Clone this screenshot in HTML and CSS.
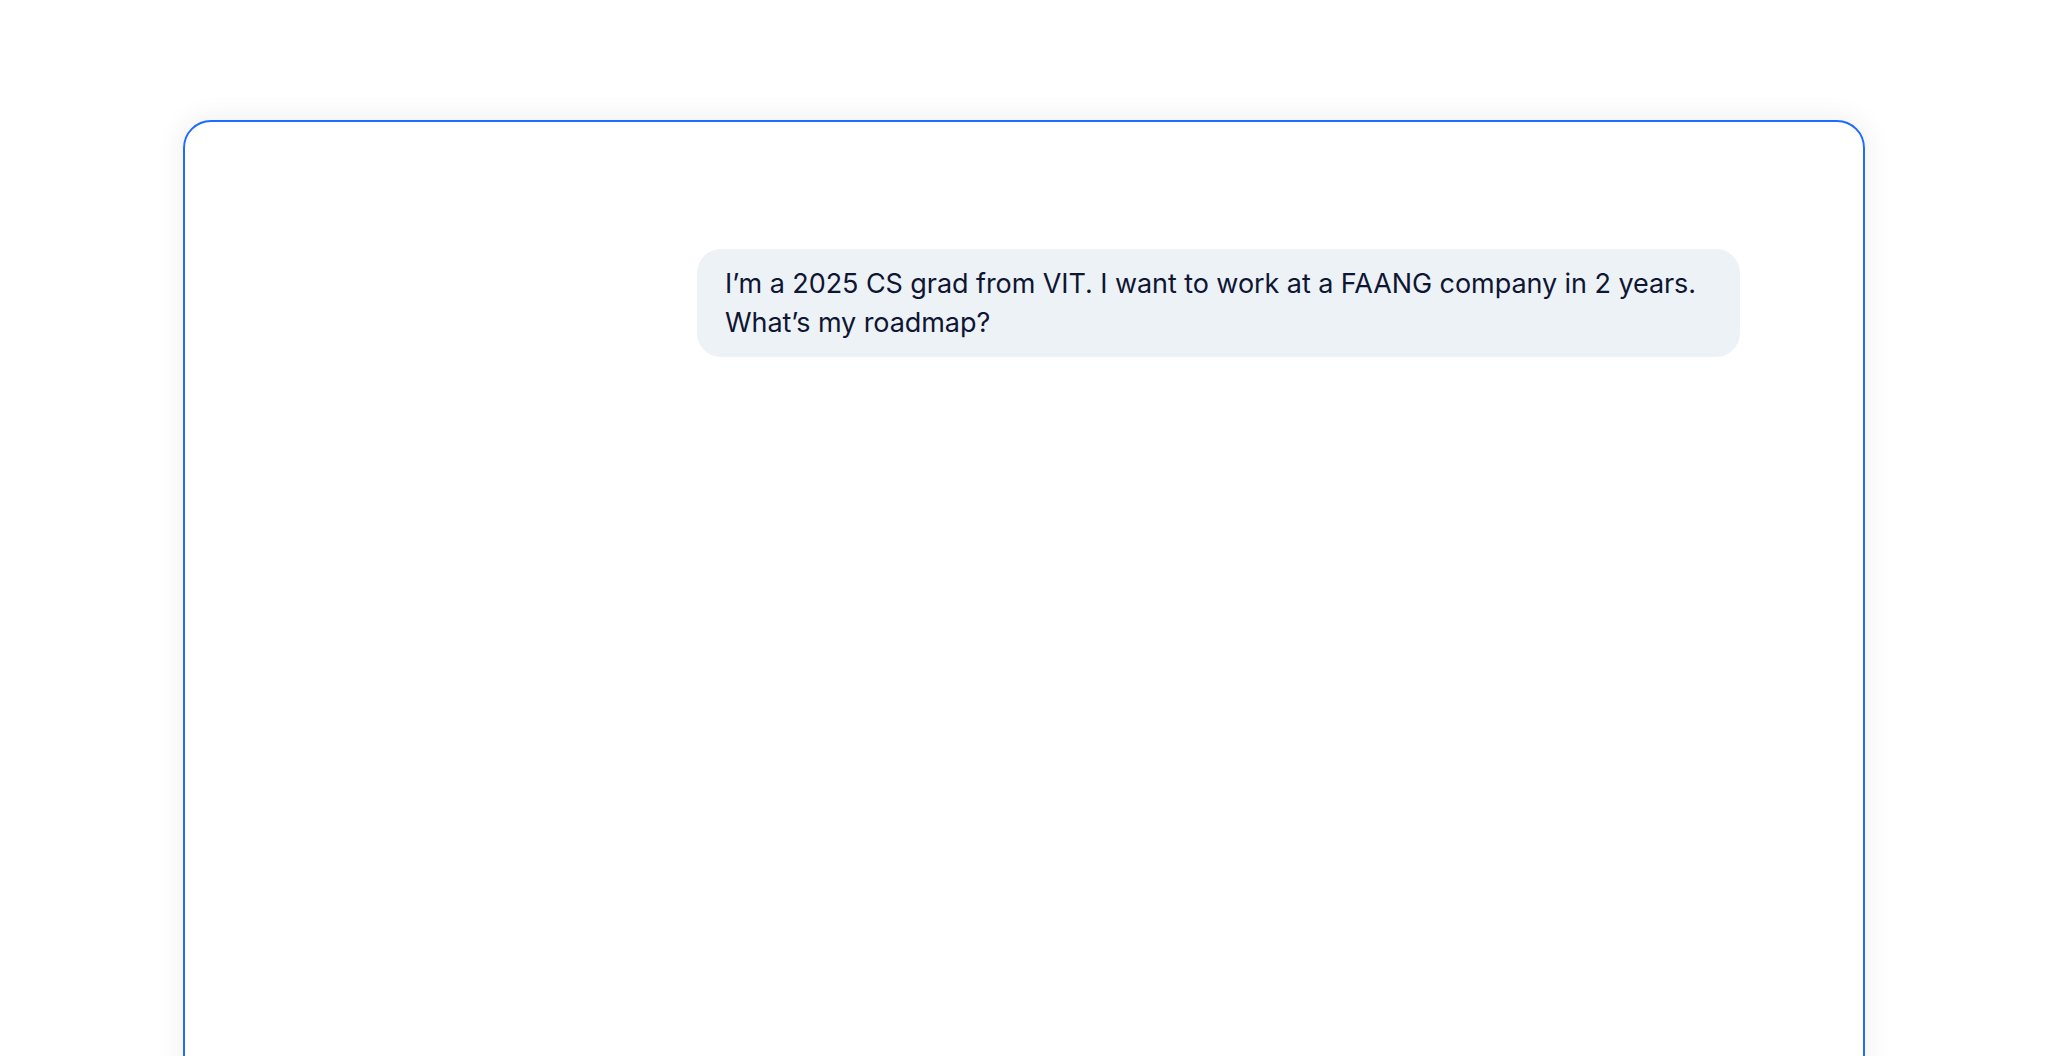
FILE: index.html
```html
<!DOCTYPE html>
<html lang="en">
<head>
<meta charset="utf-8">
<title>Chat</title>
<link rel="stylesheet" href="styles.css">
</head>
<body>
<main class="page">
  <section class="card">
    <div class="thread">
      <div class="bubble user">I’m a 2025 CS grad from VIT. I want to work at a FAANG company in 2 years. What’s my roadmap?</div>
    </div>
  </section>
</main>
</body>
</html>
```
FILE: styles.css
```css
html, body {
  margin: 0;
  padding: 0;
  background: #ffffff;
  height: 100%;
  overflow: hidden;
}
body {
  font-family: Inter, "Noto Sans", sans-serif;
  color: #0f1633;
}
.page {
  padding: 120px 183px 0;
}
.card {
  box-sizing: border-box;
  min-height: 1200px;
  border: 2px solid #1f6bff;
  border-radius: 28px;
  background: #ffffff;
  box-shadow: 0 0 24px 6px rgba(0, 0, 0, 0.05);
  padding: 127px 123px 0;
}
.thread {
  display: flex;
  flex-direction: column;
  align-items: flex-end;
}
.bubble {
  max-width: 987px;
  padding: 15px 28px;
  border-radius: 24px;
  background: #edf2f7;
  font-size: 27px;
  letter-spacing: -0.07px;
  line-height: 39px;
  color: #0f1633;
}
```
